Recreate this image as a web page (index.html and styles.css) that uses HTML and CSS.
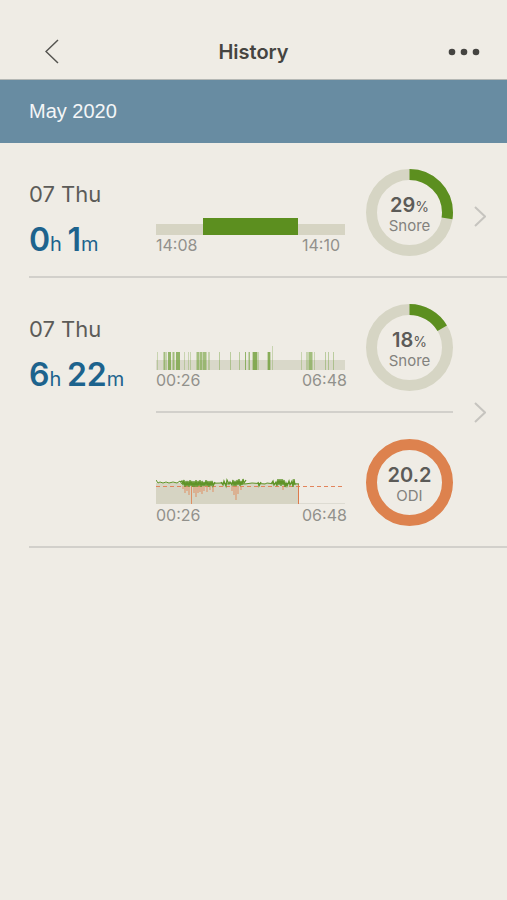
FILE: index.html
```html
<!DOCTYPE html>
<html lang="en">
<head>
    <meta charset="UTF-8">
    <meta name="viewport" content="width=device-width, initial-scale=1.0">
    <title>History</title>
    <link rel="stylesheet" href="styles.css">
</head>
<body>
<header class="header">
    <button class="header-btn" type="button" aria-label="Back">
        <svg width="14" height="25" viewBox="0 0 14 25"><path d="M13 1L1 12.5L13 24" fill="none" stroke="#555450" stroke-width="1.5"/></svg>
    </button>
    <h1 class="title">History</h1>
    <button class="header-btn header-more" type="button" aria-label="More">
        <svg width="32" height="8" viewBox="0 0 32 8" fill="#454441"><circle cx="4" cy="4" r="3.3"/><circle cx="16" cy="4" r="3.3"/><circle cx="28" cy="4" r="3.3"/></svg>
    </button>
</header>
<main>
    <h2 class="month">May 2020</h2>

    <a class="session session-single" href="#">
        <div class="when">
            <div class="date">07 Thu</div>
            <div class="duration">0<small>h </small>1<small>m</small></div>
        </div>
        <div class="metrics">
            <div class="metric">
                <div class="chart">
                    <svg class="plot" viewBox="0 0 192 30" preserveAspectRatio="none">
                        <path d="M0 19h189v11H0z" fill="#d6d4c3"/>
                        <path d="M47 13h95v17H47z" fill="#5c8f1f"/>
                    </svg>
                    <div class="times"><span>14:08</span><span>14:10</span></div>
                </div>
                <div class="ring">
                    <svg class="ring-arc" viewBox="0 0 87 87">
                        <circle cx="43.5" cy="43.5" r="38" stroke="#d6d5c4"/>
                        <circle cx="43.5" cy="43.5" r="38" stroke="#5c8f1f" pathLength="100" stroke-dasharray="27.5 100"/>
                    </svg>
                    <div class="value">29<small>%</small></div>
                    <div class="label">Snore</div>
                </div>
            </div>
        </div>
        <svg class="chevron" width="12" height="21" viewBox="0 0 12 21"><path d="M1 1l10 9.5L1 20"/></svg>
    </a>

    <a class="session" href="#">
        <div class="when">
            <div class="date">07 Thu</div>
            <div class="duration">6<small>h </small>22<small>m</small></div>
        </div>
        <div class="metrics">
            <div class="metric">
                <div class="chart">
                    <!-- snoring events, darker where they are denser -->
                    <svg class="plot" viewBox="0 0 192 30" preserveAspectRatio="none">
                        <path d="M0 20h189v10H0z" fill="#d9d8c9"/>
                        <g fill="#6c9d35">
                            <path opacity=".3" d="M1 12h1v18h-1zM28 12h1v18h-1zM32 12h1v18h-1zM34 12h1v18h-1zM40 12h11v18h-11zM52 12h2v18h-2zM7 12h4v18h-4zM16 12h3v18h-3zM92 12h2v18h-2zM96 12h7v18h-7zM111 12h4v18h-4zM116 6h1v24h-1zM145 12h1v18h-1zM150 12h1v18h-1zM151 12h6v18h-6zM158 12h1v18h-1z"/>
                            <path opacity=".4" d="M8 12h1v18h-1zM17 12h1v18h-1zM41 12h2v18h-2zM44 12h2v18h-2zM47 12h3v18h-3zM63 12h1v18h-1zM74 12h1v18h-1zM83 12h1v18h-1zM93 12h1v18h-1zM153 12h3v18h-3zM169 12h1v18h-1zM172 12h1v18h-1zM177 12h1v18h-1z"/>
                            <path opacity=".7" d="M12 12h3v18h-3zM20 12h4v18h-4zM89 12h1v18h-1zM97 12h4v18h-4zM112 12h2v18h-2z"/>
                        </g>
                    </svg>
                    <div class="times"><span>00:26</span><span>06:48</span></div>
                </div>
                <div class="ring">
                    <svg class="ring-arc" viewBox="0 0 87 87">
                        <circle cx="43.5" cy="43.5" r="38" stroke="#d6d5c4"/>
                        <circle cx="43.5" cy="43.5" r="38" stroke="#5c8f1f" pathLength="100" stroke-dasharray="16.5 100"/>
                    </svg>
                    <div class="value">18<small>%</small></div>
                    <div class="label">Snore</div>
                </div>
            </div>
            <div class="metric">
                <div class="chart">
                    <!-- oxygen level: area, dips below the limit, trace above it -->
                    <svg class="plot" viewBox="0 0 192 30" preserveAspectRatio="none" fill="none">
                        <path d="M0 8h143v21H0z" fill="#d6d4c3"/>
                        <path d="M143 28.5h46" stroke="#dddbd2"/>
                        <path d="M0 11.5h189" stroke="#e2845c" stroke-width="1.2" stroke-dasharray="4 3"/>
                        <path d="M27 11v3M29 11v7M31 11v5M33 11v9M35.5 11v18M38 11v7M40 11v11M42 11v7M44 11v6M46 11v8M48 11v5M51 11v6M54 11v4M57 11v6M76 11v5M78 11v9M80 11v14M82 11v8M85 11v4M127 11v4" stroke="#df8f63"/>
                        <path d="M142.5 9v20" stroke="#dd7a4b"/>
                        <path d="M0 5l2 3 2-1 3 1 3-1 3 1 4-1 4 1 3-2 2 3 40-1 5 1 4-1 14 1 7-1 13 1 2-1 8 1 2-1 22 1" stroke="#5f9428"/>
                        <path d="M24 7l2-1 1 3 1-4 1 7 1-6 1 5 1-5 1 6 1-7 1 6 1-5 1 6 1-6 1 6 1-7 1 7 1-6 1 5 1-6 1 7 1-6 1 5 1-4 1 4 1-6 1 6 1-5 1 6 1-6 1 5 1-5 1 5 2-4M65 7l2 3 1-4 2 5 1-6 2 4 1-2 2 3 1-5 1 6 1-5 1 5 1-6 1 5 1-6 1 7 1-5 1 4 1-6 1 4 2-3M102 7l1 4 2-4M115 9l2-3 1 4 2-3 1 4 1-7 1 6 1-6 1 7 1-7 1 6 1-5 1 7 1-4 1 3 2-5 1 4 2-4 1 6 1-8 1 6" stroke="#5f9428" stroke-width="1.3"/>
                    </svg>
                    <div class="times"><span>00:26</span><span>06:48</span></div>
                </div>
                <div class="ring">
                    <svg class="ring-arc" viewBox="0 0 87 87">
                        <circle cx="43.5" cy="43.5" r="38" stroke="#dd824e"/>
                    </svg>
                    <div class="value">20.2</div>
                    <div class="label">ODI</div>
                </div>
            </div>
        </div>
        <svg class="chevron" width="12" height="21" viewBox="0 0 12 21"><path d="M1 1l10 9.5L1 20"/></svg>
    </a>
</main>
</body>
</html>
```

FILE: styles.css
```css
* {
    box-sizing: border-box;
}
body {
    margin: 0;
    background: #efece5;
    color: #5c5b58;
    font-family: Inter, "Liberation Sans", sans-serif;
}
.header {
    display: grid;
    grid-template-columns: 1fr auto 1fr;
    align-items: center;
    height: 80px;
    padding: 24px 23px 0 41px;
    border-bottom: 1px solid #b5b8b5;
}
.header-btn {
    display: flex;
    justify-self: start;
    padding: 4px;
    border: 0;
    background: none;
    cursor: pointer;
}
.header-more {
    justify-self: end;
}
.title {
    margin: 0;
    padding-right: 18px;
    color: #454441;
    font-size: 20px;
    font-weight: 600;
    line-height: 24px;
}
.month {
    margin: 0;
    padding: 0 29px;
    background: #688ca2;
    color: #f4f6f7;
    font: 20px/63px "Liberation Sans", sans-serif;
}
.session {
    display: grid;
    grid-template-columns: 127px 1fr 54px;
    margin-left: 29px;
    border-bottom: 2px solid #d2d0cb;
    color: inherit;
    text-decoration: none;
}
.when {
    padding-top: 36px;
}
.date {
    font-size: 22px;
    line-height: 30px;
}
.duration {
    margin-top: 10px;
    color: #1d638d;
    font-size: 32px;
    font-weight: 600;
    line-height: 42px;
    white-space: nowrap;
}
.duration small {
    font-size: 20px;
    font-weight: 400;
}
.metric {
    display: flex;
    align-items: flex-end;
    gap: 18px;
    padding: 26px 0 20px;
}
.metric + .metric {
    border-top: 2px solid #d2d0cb;
}
.chart {
    flex: 1;
    padding-bottom: 1px;
}
.plot {
    display: block;
    width: 100%;
    height: 30px;
}
.times {
    display: flex;
    justify-content: space-between;
    color: #92918c;
    font-size: 16px;
    line-height: 20px;
}
.times span {
    min-width: 46px;
}
.ring {
    position: relative;
    width: 87px;
    height: 87px;
    padding-top: 24px;
    text-align: center;
}
/* the arc fills the ring box, behind its text */
.ring-arc {
    position: absolute;
    inset: 0;
    fill: none;
    stroke-width: 11;
    transform: rotate(-90deg);
}
.value {
    font-size: 20px;
    font-weight: 600;
    line-height: 24px;
}
.value small {
    font-size: 14px;
    font-weight: 400;
    line-height: 1;
}
.label {
    color: #83827e;
    font-size: 15px;
    line-height: 18px;
}
.chevron {
    align-self: center;
    justify-self: center;
    fill: none;
    stroke: #c6c4bf;
    stroke-width: 2;
}
.session-single .chevron {
    margin-top: 14px;
}
```
